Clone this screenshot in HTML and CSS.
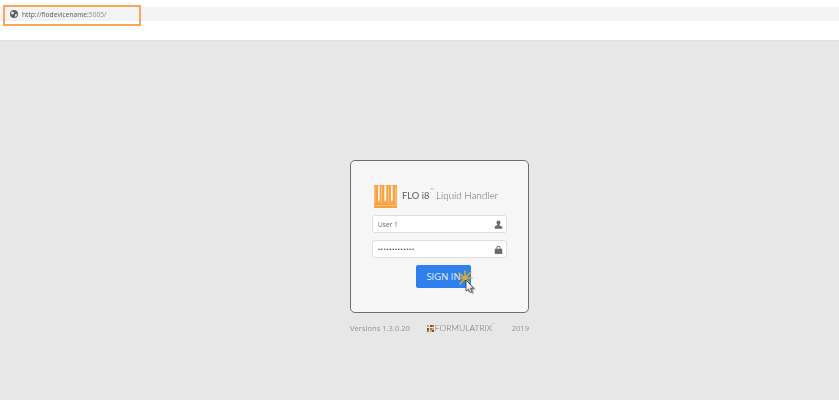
FILE: index.html
```html
<!DOCTYPE html>
<html lang="en">
<head>
<meta charset="utf-8">
<title>FLO i8 Liquid Handler</title>
<link rel="stylesheet" href="styles.css">
</head>
<body>
<header class="browser">
  <div class="address">
    <svg class="globe" viewBox="0 0 16 16" width="8" height="8"><circle cx="8" cy="8" r="8" fill="#5f6368"/><path d="M3 3l4 1 1 3-3 2-3-2zM10 9l4-1-1 4-3 2z" fill="#e8eaed"/></svg>
    <span class="url"><span class="host">http://flodevicename:</span>5005/</span>
  </div>
  <div class="highlight"></div>
</header>
<main class="page">
  <section class="card">
    <div class="brand">
      <svg class="logo" viewBox="0 0 23 23" width="23" height="23">
        <rect width="23" height="23" fill="#f9a13f"/>
        <path d="M4 0.5h1.6v14l-.8 3-.8-3zM10.4 0.5h1.8v14l-.9 3-.9-3zM17 0.5h1.7v14l-.85 3-.85-3z" fill="#fff"/>
        <path d="M0.8 0.8v18M7.6 0.8v18M14.6 0.8v18M21.8 0.8v18" stroke="#fdd9ae" stroke-width=".7"/>
        <path d="M0 20.5h23" stroke="#fcc890" stroke-width=".8"/>
      </svg>
      <span class="product">FLO i8</span><sup class="tm">™</sup>
      <span class="tagline">Liquid Handler</span>
    </div>
    <div class="field">
      <span class="value">User 1</span>
      <svg class="field-icon" viewBox="0 0 12 12" width="9" height="9"><path d="M6 0.5c1.700 0 2.600 1.200 2.600 2.900 0 1.200-.5 2.300-1.200 2.900v1l3.600 1.700v2.500H1V8.300l3.600-1.700v-1C3.900 5.700 3.400 4.600 3.400 3.400 3.400 1.700 4.300.5 6 .5z" fill="#6b6b6b"/></svg>
    </div>
    <div class="field">
      <span class="dots">•••••••••••••</span>
      <svg class="field-icon" viewBox="0 0 12 12" width="9" height="9"><path d="M3.300 5V3.600C3.300 2 4.400 1 6 1s2.700 1 2.700 2.600V5H11v7H1V5zM4.500 5h3V3.600C7.500 2.700 6.900 2.200 6 2.200s-1.500.5-1.500 1.400z" fill="#6b6b6b"/></svg>
    </div>
    <button class="signin" type="button">SIGN IN</button>
    <svg class="cursor" viewBox="0 0 22 26" width="22" height="26">
      <g stroke="#d4b02c" stroke-width="1.500" stroke-linecap="round">
        <path d="M8 9L2 4M8 9l0-7M8 9l6-6M8 9h7M8 9l4 4M8 9l-5 6M8 9H1"/>
      </g>
      <path d="M9 11v11l2.500-2 1.700 3.500 2-.8-1.700-3.500h3.300z" fill="#666" opacity=".55" transform="translate(2 1.500)"/>
      <path d="M9 11v11l2.500-2 1.700 3.500 2-.8-1.700-3.500h3.300z" fill="#f2f2f2" stroke="#333" stroke-width=".8"/>
    </svg>
  </section>
  <footer class="meta">
    <span>Versions 1.3.0.20</span>
    <span class="company">
      <span class="mark">
        <i class="c1"></i><i class="c2"></i><i class="c3"></i>
        <i class="c2"></i><i class="c3"></i><i class="c1"></i>
        <i class="c3"></i><i class="c1"></i><i class="c2"></i>
      </span>FORMULATRIX<sup class="tm-small">™</sup>
    </span>
    <span>2019</span>
  </footer>
</main>
</body>
</html>
```

FILE: styles.css
```css
* { box-sizing: border-box; }
html, body { margin: 0; height: 100%; }
body {
  width: 839px;
  height: 400px;
  overflow: hidden;
  display: flex;
  flex-direction: column;
  background: #e7e7e7;
  font-family: "Open Sans", "Liberation Sans", sans-serif;
  filter: blur(.25px);
}
.browser {
  position: relative;
  height: 41px;
  flex: none;
  padding-top: 7px;
  background: #fff;
  border-bottom: 1px solid #e2e2e2;
}
.address {
  display: flex;
  align-items: center;
  gap: 4px;
  height: 14px;
  padding-left: 10px;
  background: #f1f3f4;
}
.globe { flex: none; }
.url { font-size: 6.6px; color: #8a8c8e; letter-spacing: .04px; }
.host { color: #55585b; }
.highlight {
  position: absolute;
  left: 3px;
  top: 5px;
  width: 138px;
  height: 21px;
  border: 2px solid #f8a858;
}
.page {
  flex: 1;
  display: flex;
  flex-direction: column;
  align-items: center;
  padding-top: 119px;
  padding-left: 40px;
}
.card {
  position: relative;
  width: 179px;
  height: 153px;
  padding: 24px 21px 0;
  display: flex;
  flex-direction: column;
  align-items: center;
  background: #f6f6f6;
  border: 1px solid #6e6e6e;
  border-radius: 5px;
}
.brand {
  display: flex;
  align-items: center;
  align-self: stretch;
  height: 23px;
  padding-left: 2px;
  color: #666;
  white-space: nowrap;
}
.logo { flex: none; margin-right: 5px; }
.product { font-family: "Lato", sans-serif; font-size: 9.4px; color: #5c5c5c; margin-bottom: 2px; }
.tm { font-size: 4px; color: #999; align-self: flex-start; margin: 3px 0 0 1px; line-height: 1; }
.tagline { font-family: "Lato", sans-serif; font-weight: 300; font-size: 9.7px; color: #666; margin: 0 0 3px 2.5px; letter-spacing: .1px; }
.field {
  align-self: stretch;
  display: flex;
  align-items: center;
  justify-content: space-between;
  height: 18px;
  padding: 0 3px 0 5px;
  margin-top: 7px;
  background: #fff;
  border: 1px solid #dedede;
  border-radius: 3px;
}
.value { font-size: 6.6px; color: #666; }
.dots { font-size: 5.5px; letter-spacing: .9px; color: #444; font-family: "Liberation Sans", sans-serif; }
.field-icon { flex: none; }
.signin {
  width: 55px;
  height: 23px;
  margin: 7px 0 0 8px;
  padding: 0;
  border: 0;
  border-radius: 2px;
  background: #2f80ed;
  color: #e8f1fd;
  font-family: "Open Sans", sans-serif;
  font-size: 9.5px;
  font-weight: 400;
  white-space: nowrap;
}
.cursor {
  position: absolute;
  left: 106px;
  top: 108px;
}
.meta {
  width: 179px;
  display: flex;
  align-items: center;
  justify-content: space-between;
  margin-top: 10px;
  font-size: 7.6px;
  line-height: 11px;
  color: #8f959b;
  white-space: nowrap;
}
.company { display: flex; align-items: center; font-family: "Lato", sans-serif; font-size: 8.5px; font-weight: 300; color: #6f6f6f; }
.mark { display: grid; grid-template-columns: repeat(3, 2px); grid-auto-rows: 2px; gap: .5px; margin-right: .5px; }
.mark i { display: block; }
.c1 { background: #f29a3c; }
.c2 { background: #5a5a5a; }
.c3 { background: #9b7a4a; }
.tm-small { font-size: 3px; line-height: 1; align-self: flex-start; }
```
